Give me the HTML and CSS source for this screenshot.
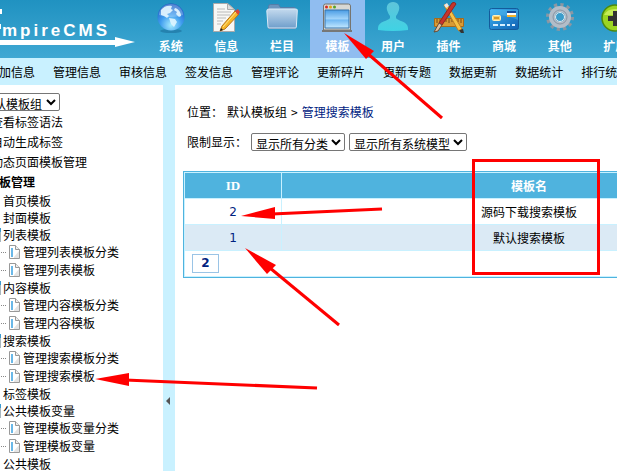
FILE: index.html
```html
<!DOCTYPE html>
<html lang="zh-CN">
<head>
    <meta charset="UTF-8">
    <meta name="viewport" content="width=device-width, initial-scale=1.0">
    <title>EmpireCMS</title>
    <link rel="stylesheet" href="styles.css">
</head>
<body>
    <!-- shared shapes -->
    <svg class="defs" width="0" height="0" aria-hidden="true">
        <defs>
            <radialGradient id="globe" cx="50%" cy="80%" r="80%">
                <stop offset="0" stop-color="#a5ecff"/>
                <stop offset="0.5" stop-color="#3f9cee"/>
                <stop offset="1" stop-color="#1c58c0"/>
            </radialGradient>
            <linearGradient id="folder" x1="0" y1="0" x2="0" y2="1">
                <stop offset="0" stop-color="#c4daee"/>
                <stop offset="1" stop-color="#6f9ecb"/>
            </linearGradient>
            <linearGradient id="pane" x1="0" y1="0" x2="0" y2="1">
                <stop offset="0" stop-color="#4a9ce4"/>
                <stop offset="0.5" stop-color="#a4d6fb"/>
                <stop offset="0.55" stop-color="#6fb7f2"/>
                <stop offset="1" stop-color="#c5e9ff"/>
            </linearGradient>
            <linearGradient id="user" x1="0" y1="0" x2="0" y2="1">
                <stop offset="0" stop-color="#5fc4da"/>
                <stop offset="1" stop-color="#3fd3e4"/>
            </linearGradient>
            <linearGradient id="card" x1="0" y1="0" x2="1" y2="1">
                <stop offset="0" stop-color="#3eb2f0"/>
                <stop offset="1" stop-color="#0f62b4"/>
            </linearGradient>
        </defs>
        <symbol id="page" viewBox="0 0 13 15">
            <path d="M1.500 .5h6l4 4v9h-10z" fill="#fff" stroke="#999"/>
            <path d="M7.500 .5v4h4" fill="#eee" stroke="#999"/>
            <path d="M3 3h2v9H3z" fill="#6ab8e8"/>
            <path d="M6 12l5-6v7H6z" fill="#e4e4e4"/>
        </symbol>
        <symbol id="book" viewBox="0 0 17 14">
            <path d="M2 0h15v4H2z" fill="#3b9ad0"/>
            <path d="M1 4h16v10H1z" fill="#a9b7bf"/>
        </symbol>
    </svg>

    <header class="header">
        <div class="logo">
            <svg class="logo-mark" viewBox="0 0 143 58" aria-hidden="true">
                <path d="M0 9h2v5H0zM0 24h1v5H0zM0 40h115v-3l20 5-20 5v-2H0z" fill="#fff"/>
            </svg>
            <span class="logo-text">mpireCMS</span>
        </div>
        <nav class="modules">
            <a href="#" class="module">
                <svg class="module-icon" viewBox="0 0 32 32">
                    <ellipse cx="16" cy="29" rx="11" ry="2" fill="#1d6f9c" opacity=".6"/>
                    <circle cx="16" cy="15" r="13.500" fill="url(#globe)"/>
                    <path d="M6 8c3-4 7-5 11-4l-1 3 2 1-3 3-3 1 2 2-2 2-3-2-3-1zM14 16l6 1 2 3-3 5-3-3zM20 6c4 1 6 5 6 8l-2 1-3-3 1-2-3-2z" fill="#dff5ff" opacity=".9"/>
                    <path d="M4 13a12 11 0 0 1 24 0q-12 4-24 0z" fill="#fff" opacity=".25"/>
                </svg>
                <span>系统</span>
            </a>
            <a href="#" class="module">
                <svg class="module-icon" viewBox="0 0 32 32">
                    <path d="M3.500 1.500h14l7 6v22h-21z" fill="#f7f7f5" stroke="#aaa"/>
                    <path d="M17.500 1.500v6h7z" fill="#ddd" stroke="#aaa"/>
                    <path d="M7 7h8M7 10h14M7 13h13M7 16h9M7 19h6M7 22h4" stroke="#bbb"/>
                    <path d="M12 24L25 9l4 3-14 15-5 2z" fill="#f6b729" stroke="#b7751b"/>
                    <path d="M13 25L26 10" stroke="#ffe58a"/>
                    <path d="M25 9l3-2 2 3-2 3z" fill="#d8453a"/>
                    <path d="M10 29l1-3 2 2z" fill="#222"/>
                </svg>
                <span>信息</span>
            </a>
            <a href="#" class="module">
                <svg class="module-icon" viewBox="0 0 32 32">
                    <path d="M2.500 4.500q0-2 2-2h8l2 3h14q1 0 1 2v19h-27z" fill="#6b94bd" stroke="#547da8"/>
                    <path d="M.8 9q0-2 2-2h27q2 0 1.500 2l-1 16q0 1-1 1H3q-1 0-1-1z" fill="url(#folder)" stroke="#d9e9f6"/>
                </svg>
                <span>栏目</span>
            </a>
            <a href="#" class="module active">
                <svg class="module-icon" viewBox="0 0 32 32">
                    <path d="M2.500 28V4q0-2 2-2h23q2 0 2 2v24z" fill="#d8d8d4" stroke="#77756f"/>
                    <path d="M4 8h24v18H4z" fill="url(#pane)" stroke="#3775ad"/>
                    <path d="M1 28h30v2H1z" fill="#777"/>
                    <circle cx="5.500" cy="5" r="1.500" fill="#d42a20"/>
                    <circle cx="9.500" cy="5" r="1.500" fill="#e1a511"/>
                    <circle cx="13.500" cy="5" r="1.500" fill="#55a327"/>
                </svg>
                <span>模板</span>
            </a>
            <a href="#" class="module">
                <svg class="module-icon" viewBox="0 0 32 32">
                    <path d="M16 0c5 0 7 4 6 8-1 3-2 5-3 6v2c1 3 12 3 12 10v2q-15 2-30 0v-2c0-7 11-7 12-10v-2c-1-1-2-3-3-6-1-4 1-8 6-8z" fill="url(#user)"/>
                </svg>
                <span>用户</span>
            </a>
            <a href="#" class="module">
                <svg class="module-icon" viewBox="0 0 32 32">
                    <path d="M1.500 16.500h29v8h-29z" fill="#d99b35" stroke="#a66b1b"/>
                    <path d="M4 17v4M7 17v3M10 17v4M13 17v3M16 17v4M19 17v3M22 17v4M25 17v3M28 17v4" stroke="#754c16"/>
                    <path d="M11 3l3-1 15 25-1 3-3-2z" fill="#f6c246" stroke="#bf7e1f"/>
                    <path d="M11 3l3-2 2 3-3 2z" fill="#e9e9e9"/>
                    <path d="M28 31l-2-3 4-1 1 4z" fill="#333"/>
                    <path d="M19 1q3-2 4 1L9 23l-3-2z" fill="#c6332b" stroke="#8f2620"/>
                    <path d="M6 21l3 2-4 6-4 1z" fill="#d9c2a3" stroke="#6b4b32"/>
                </svg>
                <span>插件</span>
            </a>
            <a href="#" class="module">
                <svg class="module-icon" viewBox="0 0 32 32">
                    <rect x="1.500" y="6.500" width="29" height="21" rx="2" fill="url(#card)" stroke="#145b9b"/>
                    <path d="M2 13Q16 12 30 18v-10H2z" fill="#57bdf3" opacity=".4"/>
                    <path d="M19 9h9v2h-9z" fill="#174d99"/>
                    <path d="M19 11h9v2h-9z" fill="#fff"/>
                    <path d="M19 13h9v2h-9z" fill="#f3b32c"/>
                    <rect x="4.500" y="13.500" width="8" height="5" rx="1" fill="#f9d170" stroke="#fff2bd"/>
                    <path d="M6 15h5v2H6z" fill="#d79a2a"/>
                    <path d="M5 23h5M12 23h5M19 23h3M24 23h3" stroke="#d6efff" stroke-width="2"/>
                </svg>
                <span>商城</span>
            </a>
            <a href="#" class="module">
                <svg class="module-icon" viewBox="0 0 32 32">
                    <circle cx="16" cy="15" r="12" fill="none" stroke="#8b97a3" stroke-width="4" stroke-dasharray="3.140 3.140"/>
                    <circle cx="16" cy="15" r="8" fill="none" stroke="#b3bdc8" stroke-width="6"/>
                    <circle cx="16" cy="15" r="7" fill="none" stroke="#8895a4" stroke-width="1"/>
                    <circle cx="16" cy="15" r="4.500" fill="#3a9dcb" stroke="#e2e8ee"/>
                </svg>
                <span>其他</span>
            </a>
            <a href="#" class="module">
                <svg class="module-icon" viewBox="0 0 32 32">
                    <circle cx="16" cy="16" r="13" fill="#9bd522" stroke="#4d8a0f" stroke-width="1.500"/>
                    <path d="M5 13a12 10 0 0 1 22 0z" fill="#c5ec57"/>
                    <path d="M14 9h5v5h5v5h-5v5h-5v-5H9v-5h5z" fill="#333"/>
                </svg>
                <span>扩展</span>
            </a>
        </nav>
    </header>

    <nav class="quick-bar">
        <a href="#">增加信息</a>
        <a href="#">管理信息</a>
        <a href="#">审核信息</a>
        <a href="#">签发信息</a>
        <a href="#">管理评论</a>
        <a href="#">更新碎片</a>
        <a href="#">更新专题</a>
        <a href="#">数据更新</a>
        <a href="#">数据统计</a>
        <a href="#">排行统计</a>
    </nav>

    <div class="layout">
        <aside class="sidebar">
            <div class="sidebar-inner">
                <select class="group-select" aria-label="模板组">
                    <option>默认模板组</option>
                </select>
                <a href="#" class="note">查看标签语法</a>
                <a href="#" class="note">自动生成标签</a>
                <a href="#" class="note">动态页面模板管理</a>
                <h2 class="tree-title">模板管理</h2>
                <ul class="tree">
                    <li class="branch"><a href="#">首页模板</a></li>
                    <li class="branch"><a href="#">封面模板</a></li>
                    <li class="branch open"><svg class="book"><use href="#book"/></svg><a href="#">列表模板</a></li>
                    <li class="leaf"><svg class="page"><use href="#page"/></svg><a href="#">管理列表模板分类</a></li>
                    <li class="leaf"><svg class="page"><use href="#page"/></svg><a href="#">管理列表模板</a></li>
                    <li class="branch open"><svg class="book"><use href="#book"/></svg><a href="#">内容模板</a></li>
                    <li class="leaf"><svg class="page"><use href="#page"/></svg><a href="#">管理内容模板分类</a></li>
                    <li class="leaf"><svg class="page"><use href="#page"/></svg><a href="#">管理内容模板</a></li>
                    <li class="branch open"><svg class="book"><use href="#book"/></svg><a href="#">搜索模板</a></li>
                    <li class="leaf"><svg class="page"><use href="#page"/></svg><a href="#">管理搜索模板分类</a></li>
                    <li class="leaf"><svg class="page"><use href="#page"/></svg><a href="#">管理搜索模板</a></li>
                    <li class="branch"><a href="#">标签模板</a></li>
                    <li class="branch open"><svg class="book"><use href="#book"/></svg><a href="#">公共模板变量</a></li>
                    <li class="leaf"><svg class="page"><use href="#page"/></svg><a href="#">管理模板变量分类</a></li>
                    <li class="leaf"><svg class="page"><use href="#page"/></svg><a href="#">管理模板变量</a></li>
                    <li class="branch"><a href="#">公共模板</a></li>
                </ul>
            </div>
        </aside>

        <button class="splitter" type="button" aria-label="收起菜单">
            <svg width="4" height="8" viewBox="0 0 4 8"><path d="M4 0v8L0 4z" fill="#555"/></svg>
        </button>

        <main class="content">
            <div class="crumbs">
                <span>位置：</span>
                <span>默认模板组</span>
                <span>&gt;</span>
                <a href="#">管理搜索模板</a>
            </div>
            <form class="filters">
                <label for="class-filter">限制显示：</label>
                <select id="class-filter" class="class-filter">
                    <option>显示所有分类</option>
                </select>
                <select class="model-filter" aria-label="系统模型">
                    <option>显示所有系统模型</option>
                </select>
            </form>
            <table class="list">
                <thead>
                    <tr>
                        <th class="col-id">ID</th>
                        <th class="col-name">模板名</th>
                        <th></th>
                    </tr>
                </thead>
                <tbody>
                    <tr>
                        <td><a href="#">2</a></td>
                        <td>源码下载搜索模板</td>
                        <td></td>
                    </tr>
                    <tr class="alt">
                        <td><a href="#">1</a></td>
                        <td>默认搜索模板</td>
                        <td></td>
                    </tr>
                </tbody>
                <tfoot>
                    <tr>
                        <td colspan="3"><a href="#" class="total">2</a></td>
                    </tr>
                </tfoot>
            </table>
        </main>
    </div>

    <!-- red marks drawn over the page -->
    <svg class="marks" width="617" height="471" viewBox="0 0 617 471" aria-hidden="true">
        <g fill="none" stroke="#f00" stroke-width="3">
            <path d="M367 53L442 118"/>
            <path d="M272 214L382 209"/>
            <path d="M270 268L339 325"/>
            <path d="M125 380L317 388"/>
            <rect x="473.500" y="160.500" width="125" height="113"/>
        </g>
        <g fill="#f00">
            <path d="M344 33l30 18-8 8z"/>
            <path d="M241 216l34-9v12z"/>
            <path d="M245 248l31 17-9 9z"/>
            <path d="M95 379l34-6v13z"/>
        </g>
    </svg>
</body>
</html>
```
FILE: styles.css
```css
* {
    box-sizing: border-box;
}
body {
    margin: 0;
    min-height: 100vh;
    position: relative;
    display: flex;
    flex-direction: column;
    overflow: hidden;
    background: #c9f1ff;
    color: #000;
    font-family: "Noto Sans CJK SC", sans-serif;
    font-size: 12px;
    line-height: 18px;
}
a {
    color: inherit;
    text-decoration: none;
}
.defs {
    position: absolute;
}

/* header */
.header {
    display: flex;
    height: 58px;
    background: linear-gradient(#2092c1, #40a8d3);
}
.logo {
    position: relative;
    flex: 0 0 143px;
    padding: 21px 0 0 2px;
}
.logo-mark {
    position: absolute;
    top: 0;
    left: 0;
    width: 143px;
    height: 58px;
}
.logo-text {
    color: #fff;
    font-family: "Liberation Sans", Arial, sans-serif;
    font-size: 17px;
    font-weight: bold;
    line-height: 20px;
    letter-spacing: 3px;
}
.modules {
    flex: 0 0 500px;
    display: grid;
    grid-template-columns: repeat(9, 1fr);
}
.module {
    display: flex;
    flex-direction: column;
    align-items: center;
    gap: 3px;
    padding-top: 2px;
    color: #fff;
    font-weight: bold;
}
.module.active {
    background: #90bdf0;
}
.module-icon {
    width: 32px;
    height: 32px;
}

.quick-bar {
    display: flex;
    gap: 18px;
    height: 27px;
    margin-left: -13px;
    padding-top: 5px;
    white-space: nowrap;
}

/* columns under the header */
.layout {
    flex: 1;
    display: flex;
    height: calc(100vh - 85px);
}
.sidebar {
    flex: 0 0 163px;
    overflow: hidden;
    background: #fff;
}
.sidebar-inner {
    margin-left: -23px;
    padding-top: 8px;
    white-space: nowrap;
}
select {
    height: 18px;
    padding: 0;
    border: 1px solid #767676;
    border-radius: 2px;
    background: #fff;
    color: #000;
    font-family: inherit;
    font-size: 12px;
}
.group-select {
    display: block;
    width: 83px;
    margin-bottom: 1px;
}
.note {
    display: block;
    padding-left: 14px;
    line-height: 20px;
}
.tree-title {
    margin: 0;
    padding-left: 10px;
    font-size: 12px;
    line-height: 20px;
}
.tree {
    margin: 0;
    padding: 0;
    list-style: none;
}
.branch {
    display: flex;
    align-items: center;
    height: 17px;
    padding-left: 26px;
}
.branch.open {
    gap: 2px;
    padding-left: 7px;
}
.book {
    width: 17px;
    height: 14px;
}
.leaf {
    display: flex;
    align-items: center;
    gap: 2px;
    height: 18px;
    padding-left: 24px;
}
.leaf::before {
    content: "";
    width: 5px;
    border-top: 1px dotted #888;
}
.page {
    width: 13px;
    height: 15px;
}
.splitter {
    flex: 0 0 12px;
    display: flex;
    padding: 312px 0 0 3px;
    border: 0;
    background: #c9f1ff;
}

.content {
    flex: 1;
    min-width: 0;
    overflow: hidden;
    padding: 18px 0 0 8px;
    background: #fff;
}
.crumbs {
    display: flex;
    gap: 4px;
    margin: 0 0 12px 4px;
}
.crumbs a,
.list a {
    color: #00227f;
}
.filters {
    display: flex;
    align-items: center;
    gap: 4px;
    margin: 0 0 20px 4px;
}
.class-filter {
    width: 94px;
}
.model-filter {
    width: 118px;
}

/* template list, runs on past the right edge */
.list {
    width: 100%;
    min-width: 720px;
    table-layout: fixed;
    border: 1px solid #4fb3de;
    border-spacing: 1px;
    background: #c9f1ff;
    text-align: center;
}
.list th,
.list td {
    height: 25px;
    padding: 0;
    background: #fff;
}
.list th {
    background: #4fb3de;
    color: #fff;
}
.list .col-id {
    width: 96px;
    font-family: "Liberation Serif", serif;
    font-size: 13px;
}
.list .col-name {
    width: 494px;
}
.list .alt td {
    background: #dbeaf5;
}
.list td a {
    font-family: "DejaVu Sans", sans-serif;
    font-size: 12px;
}
.list tfoot td {
    padding-left: 7px;
    text-align: left;
}
.list .total {
    display: block;
    width: 27px;
    border: 1px solid #9ac4e6;
    font-weight: bold;
    line-height: 17px;
    text-align: center;
}

.marks {
    position: absolute;
    top: 0;
    left: 0;
    pointer-events: none;
}
```
